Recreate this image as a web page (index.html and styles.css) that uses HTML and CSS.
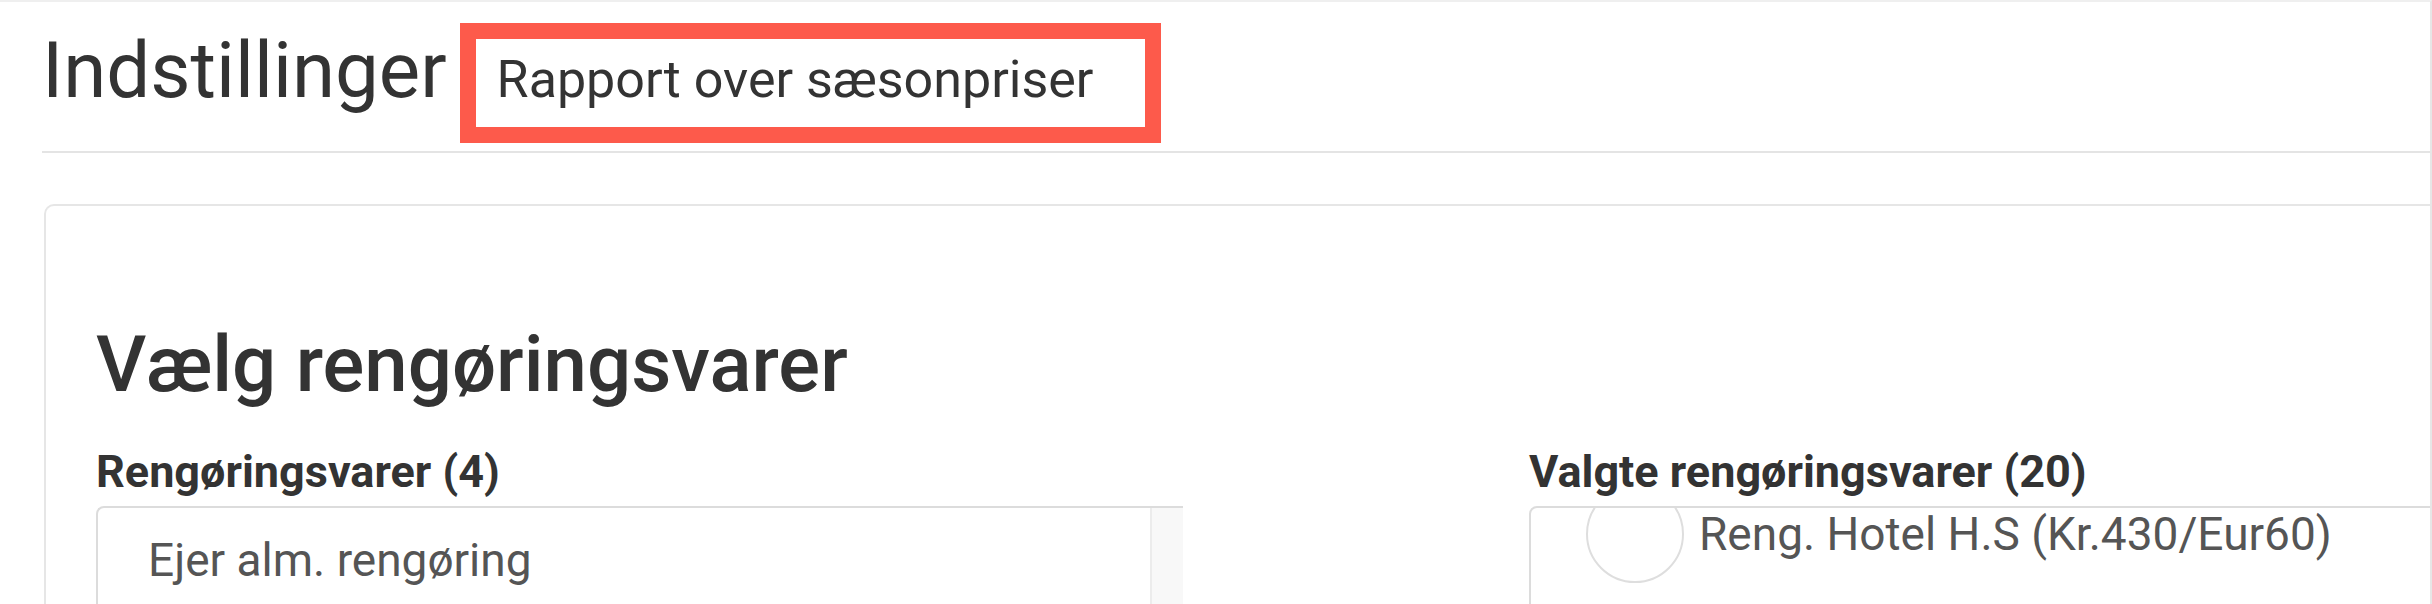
FILE: index.html
```html
<!DOCTYPE html>
<html lang="da">
<head>
<meta charset="utf-8">
<title>Indstillinger</title>
<link rel="stylesheet" href="styles.css">
</head>
<body>
<div class="frame">
  <header class="page-header">
    <h1 class="page-title">Indstillinger</h1>
    <div class="highlight">Rapport over sæsonpriser</div>
  </header>
  <section class="card">
    <h2 class="card-title">Vælg rengøringsvarer</h2>
    <div class="dual">
      <div class="col">
        <div class="col-label">Rengøringsvarer (4)</div>
        <div class="listbox listbox-left">
          <ul class="items">
            <li class="item">Ejer alm. rengøring</li>
          </ul>
          <div class="track"></div>
        </div>
      </div>
      <div class="col">
        <div class="col-label">Valgte rengøringsvarer (20)</div>
        <div class="listbox listbox-right">
          <ul class="items items-scrolled">
            <li class="item item-check"><span class="check"></span><span>Reng. Hotel H.S (Kr.430/Eur60)</span></li>
          </ul>
        </div>
      </div>
    </div>
  </section>
</div>
</body>
</html>
```
FILE: styles.css
```css
html, body {
  margin: 0;
  padding: 0;
  background: #fff;
  overflow: hidden;
}
body {
  font-family: Roboto, "Liberation Sans", Arial, sans-serif;
  color: #333;
}
.frame {
  box-sizing: border-box;
  height: 604px;
  border-top: 2px solid #efefef;
  border-right: 2px solid #e6e6e6;
  padding-left: 42px;
  overflow: hidden;
}
.page-header {
  display: flex;
  align-items: baseline;
  padding-top: 21px;
  padding-bottom: 8px;
  border-bottom: 2px solid #e4e4e4;
}
.page-title {
  margin: 0;
  font-size: 78px;
  line-height: 1;
  font-weight: 400;
  color: #333;
}
.highlight {
  margin-left: 13px;
  border: 16px solid #fd5a4b;
  padding: 0 52px 6px 21px;
  font-size: 52px;
  line-height: 82px;
  color: #333;
  white-space: nowrap;
}
.card {
  margin-top: 51px;
  margin-left: 2px;
  border: 2px solid #e6e6e6;
  border-right: 0;
  border-radius: 10px 0 0 0;
  padding: 111px 0 0 50px;
  height: 600px;
  overflow: hidden;
}
.card-title {
  margin: 0;
  font-size: 78px;
  line-height: 96px;
  font-weight: 500;
  color: #333;
}
.dual {
  display: grid;
  grid-template-columns: 1087px 1200px;
  column-gap: 346px;
  margin-top: 34px;
}
.col-label {
  font-size: 45px;
  line-height: 50px;
  font-weight: 700;
  color: #333;
  white-space: nowrap;
}
.listbox {
  margin-top: 9px;
  border: 2px solid #dcdcdc;
  border-radius: 8px 0 0 0;
  height: 200px;
  overflow: hidden;
  display: flex;
}
.listbox-left {
  border-right: 0;
}
.items {
  list-style: none;
  margin: 0;
  padding: 0;
  flex: 1;
}
.item {
  padding: 22px 50px 0 50px;
  font-size: 46px;
  line-height: 60px;
  color: #555;
  white-space: nowrap;
}
.track {
  width: 31px;
  border-left: 2px solid #ececec;
  background: #f8f8f8;
}
.items-scrolled {
  margin-top: -23px;
}
.item-check {
  display: flex;
  align-items: center;
  gap: 15px;
  padding: 0 0 0 55px;
  height: 98px;
}
.check {
  box-sizing: border-box;
  width: 98px;
  height: 98px;
  border: 2px solid #dedede;
  border-radius: 50%;
  flex: none;
}
```
